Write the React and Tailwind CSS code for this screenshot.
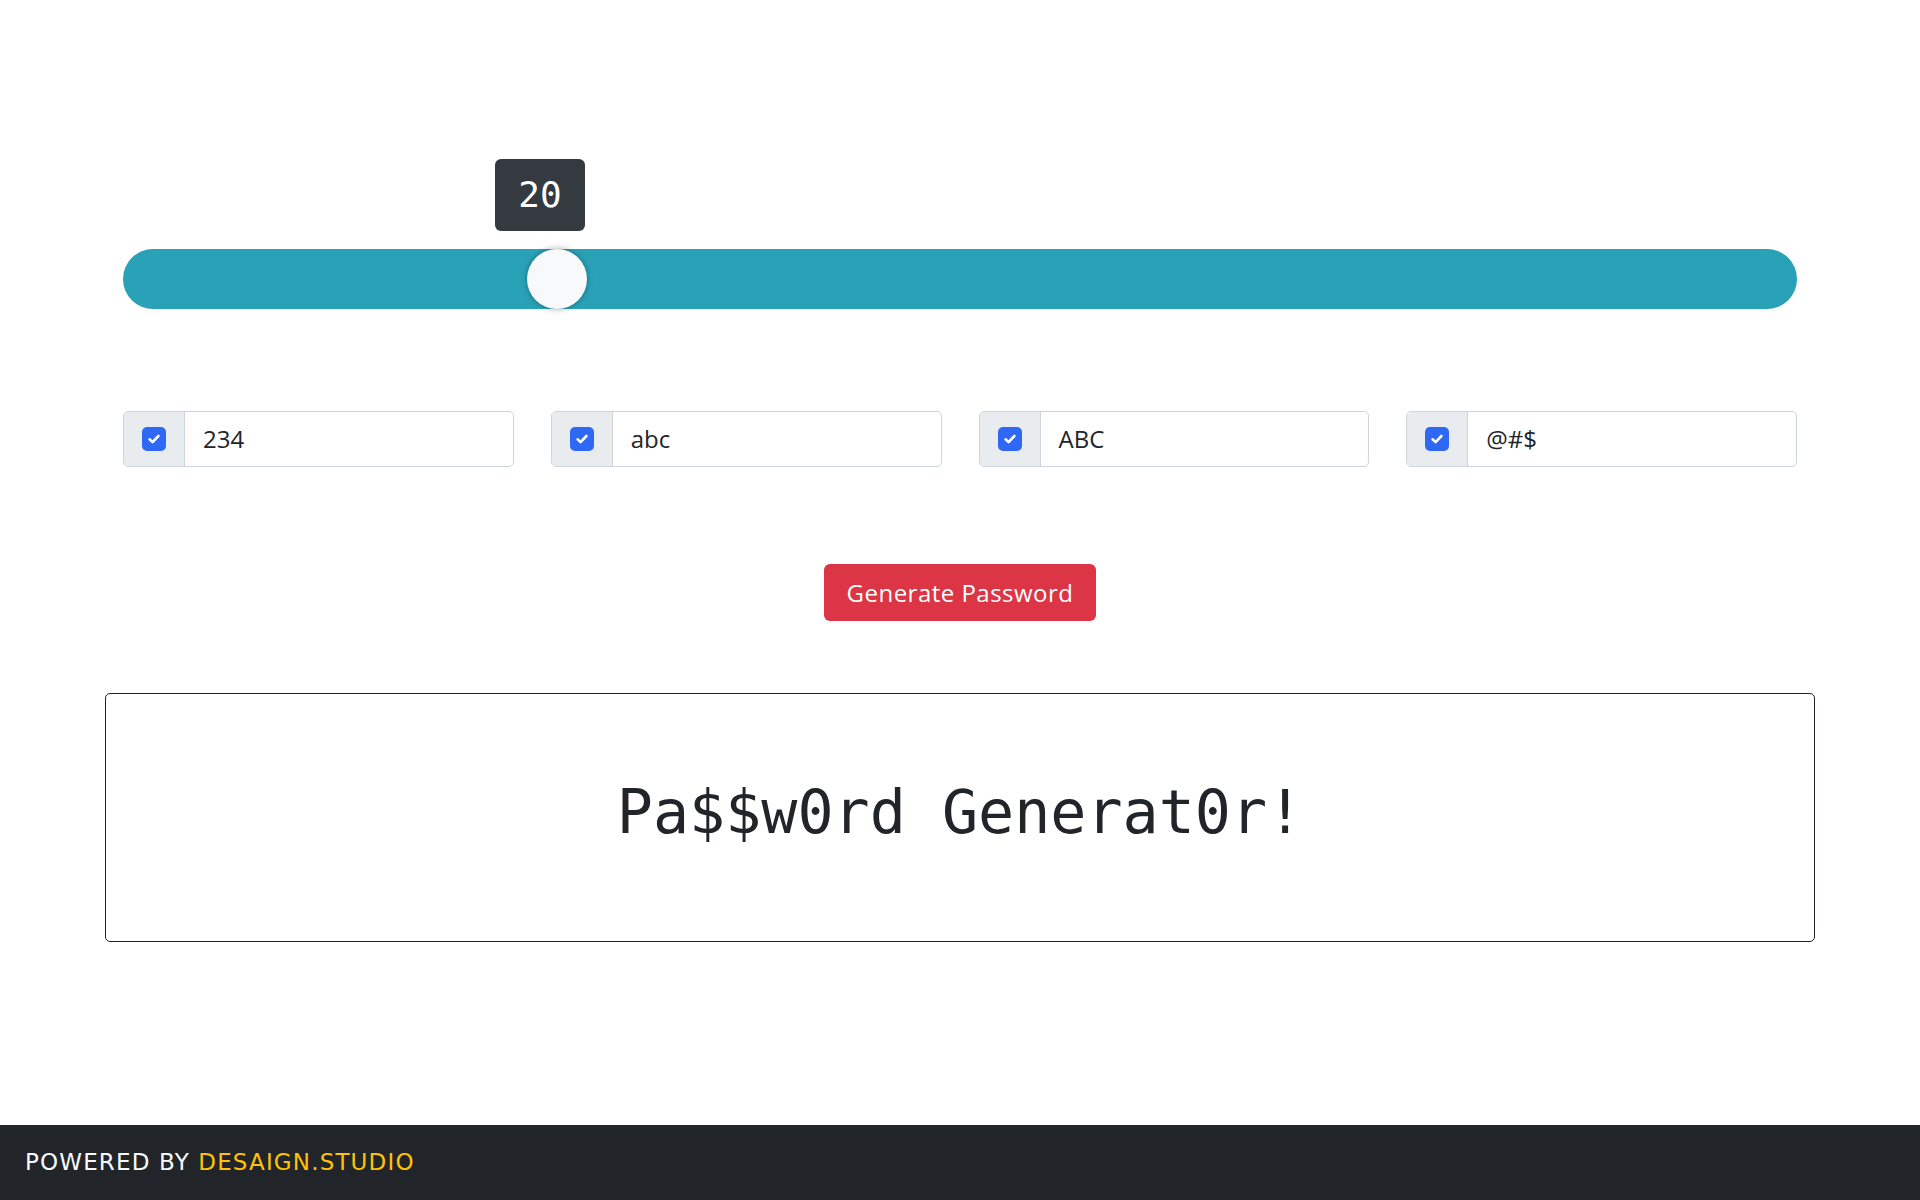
import React from "react";

const options = ["234", "abc", "ABC", "@#$"];

function Check() {
  return (
    <div className="flex h-6 w-6 items-center justify-center rounded-[5px] bg-[#2f68f5]">
      <svg width="16" height="16" viewBox="0 0 16 16" fill="none">
        <path d="M3.6 8.3 L6.6 11.1 L12.4 5" stroke="white" strokeWidth="2.6" strokeLinecap="round" strokeLinejoin="round" />
      </svg>
    </div>
  );
}

export default function App() {
  return (
    <div className="flex min-h-[1200px] flex-col bg-white font-['Open_Sans',sans-serif] text-[#212529]">
      <main className="flex-1">
        <div className="px-[123px] pt-[249px]">
          <div className="relative h-[60px] w-full rounded-full bg-[#29a2b8]">
            <div className="absolute left-[372px] top-[-90px] flex h-[72px] w-[90px] items-center justify-center rounded-[6px] bg-[#343a40] font-['DejaVu_Sans_Mono',monospace] text-[36px] text-white slashed-zero">
              20
            </div>
            <div className="absolute left-[404px] top-0 h-[60px] w-[60px] rounded-full bg-[#f8f9fa] shadow-[0_0_6px_rgba(0,0,0,0.35)]" />
          </div>
        </div>

        <div className="mt-[102px] grid grid-cols-4 gap-[37px] px-[123px]">
          {options.map((o) => (
            <div key={o} className="flex h-[56px] overflow-hidden rounded-[5px] border border-[#ced4da]">
              <div className="flex w-[61px] items-center justify-center border-r border-[#ced4da] bg-[#e9ecef]">
                <Check />
              </div>
              <div className="flex flex-1 items-center pl-[18px] text-[24px] text-[#212529]">{o}</div>
            </div>
          ))}
        </div>

        <div className="mt-[97px] flex justify-center">
          <button className="flex h-[57px] w-[272px] items-center justify-center rounded-[6px] bg-[#dc3545] text-[24px] tracking-[0.02em] text-white">
            Generate Password
          </button>
        </div>

        <div className="mx-[105px] mt-[72px] flex h-[249px] items-center justify-center rounded-[5px] border border-[#212529] pb-[12px]">
          <span className="font-['DejaVu_Sans_Mono',monospace] text-[60px] text-[#212529] slashed-zero">Pa$$w0rd Generat0r!</span>
        </div>
      </main>

      <footer className="flex h-[75px] items-center bg-[#212529] pl-[25px] font-['DejaVu_Sans',sans-serif] text-[23px] tracking-[0.05em]">
        <span className="text-[#f8f9fa]">POWERED BY&nbsp;</span>
        <span className="text-[#ffc107]">DESAIGN.STUDIO</span>
      </footer>
    </div>
  );
}
